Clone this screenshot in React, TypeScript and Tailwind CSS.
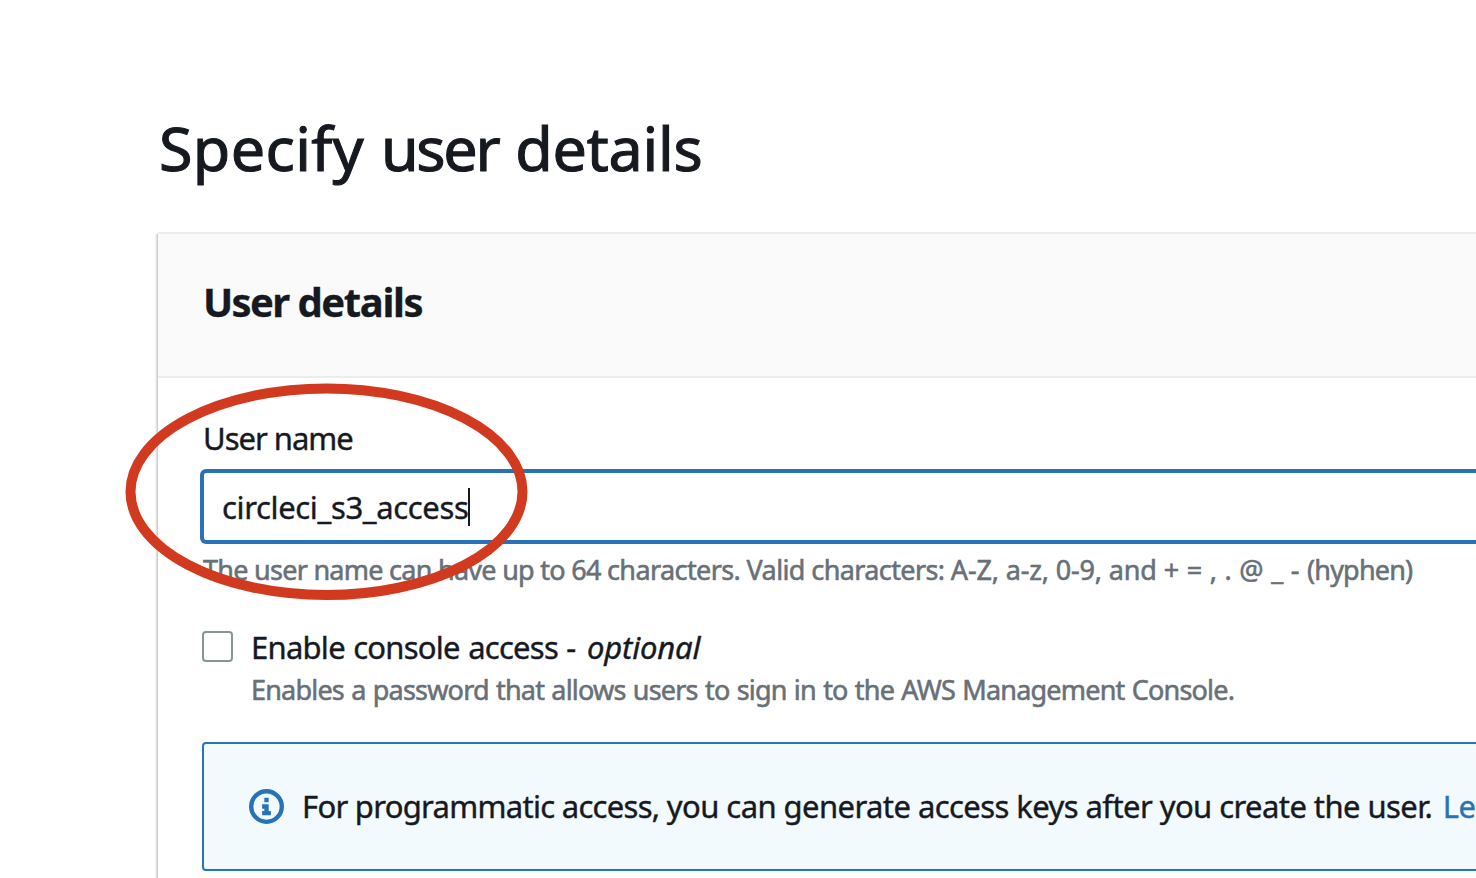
function InfoIcon() {
  return (
    <svg
      className="size-[35px] shrink-0 text-[#2872b8]"
      viewBox="0 0 16 16"
      fill="none"
      stroke="currentColor"
      strokeWidth="2"
      aria-hidden="true"
    >
      <circle cx="8" cy="8" r="7" />
      <path d="M8 11V8H6M10 11H6M8 6V4" />
    </svg>
  );
}

function UserNameField() {
  return (
    <div>
      <label className="block pl-px text-[31px] leading-10 tracking-[-0.033em]">User name</label>
      <div className="mt-[13px] flex h-[71px] items-center rounded-[4px] border-2 border-[#2872b8] bg-white pl-[18px] shadow-[0_0_0_2px_#2872b8]">
        <span className="text-[31px] leading-10 tracking-[-0.0112em]">circleci_s3_access</span>
        <span className="-ml-px h-[38px] w-0.5 bg-[#16191f]" />
      </div>
      <p className="mt-3 pl-px text-[27px] leading-8 tracking-[-0.0225em] text-[#687078] [-webkit-text-stroke:0.55px]">
        <span className="tracking-[-0.027em]">The user name can have up to 64</span> characters. Valid characters:{" "}
        <span className="tracking-[-0.0057em]">A-Z, a-z, 0-9, and </span>
        <span className="tracking-[-0.0157em] [word-spacing:1.4px]">+ = , . @ _ - </span>
        <span className="tracking-[-0.03em]">(hyphen)</span>
      </p>
    </div>
  );
}

function ConsoleAccessOption() {
  return (
    <div className="mt-[41px] flex h-[115px] items-start">
      <span className="mt-1 size-[31px] shrink-0 rounded-[4px] border-2 border-[#879596] bg-white" />
      <div className="pl-[18px]">
        <div className="text-[31px] leading-10 tracking-[-0.024em] [word-spacing:1px]">
          Enable console access - <em className="ml-[3px] tracking-[-0.005em]">optional</em>
        </div>
        <p className="mt-[7px] text-[27px] leading-8 tracking-[-0.0296em] text-[#687078] [-webkit-text-stroke:0.55px] [word-spacing:1px]">
          Enables a password that allows users to sign in to the AWS Management Console.
        </p>
      </div>
    </div>
  );
}

function AccessKeyNotice() {
  return (
    <div className="flex h-[129px] items-center rounded-[4px] border-2 border-[#2872b8] bg-[#f2fafd] pl-[45px]">
      <InfoIcon />
      <p className="ml-[18px] pb-px text-[31px] leading-10 tracking-[-0.0185em]">
        <span className="tracking-[-0.023em]">For programmatic access,</span> you can generate access keys after you create the user.{" "}
        <a className="ml-[3px] text-[#2872b8]">Learn more</a>
      </p>
    </div>
  );
}

export default function App() {
  return (
    <main className="relative h-[878px] w-full overflow-hidden bg-white pl-[157px] font-['Noto_Sans',sans-serif] whitespace-nowrap text-[#16191f] [-webkit-text-stroke:0.4px]">
      <h1 className="mt-[110px] pl-0.5 text-[61px] leading-[76px] tracking-[-0.004em] [-webkit-text-stroke:1.1px] [word-spacing:1.2px]">
        <span className="tracking-[0.006em]">Specify</span> <span className="tracking-[-0.037em]">user</span> details
      </h1>
      <section className="mt-[46px] ml-px h-[800px] w-[1800px] border-t-2 border-[#eaeded] bg-white shadow-[0_2px_2px_0_rgba(0,28,36,0.3),-2px_2px_2px_0_rgba(0,28,36,0.15)]">
        <header className="h-36 border-b-2 border-[#eaeded] bg-[#fafafa] pt-[38px] pl-[45px]">
          <h2 className="text-[40px] leading-[60px] font-bold tracking-[-0.034em] [-webkit-text-stroke:0.3px]">
            <span className="tracking-[-0.042em]">User</span> details
          </h2>
        </header>
        <div className="px-11 pt-10">
          <UserNameField />
          <ConsoleAccessOption />
          <AccessKeyNotice />
        </div>
      </section>
      <svg className="absolute top-[380px] left-[120px]" width="414" height="224" fill="none" aria-hidden="true">
        <ellipse cx="206.5" cy="111.7" rx="196" ry="103.3" stroke="#d13a1f" strokeWidth="10" />
      </svg>
    </main>
  );
}
